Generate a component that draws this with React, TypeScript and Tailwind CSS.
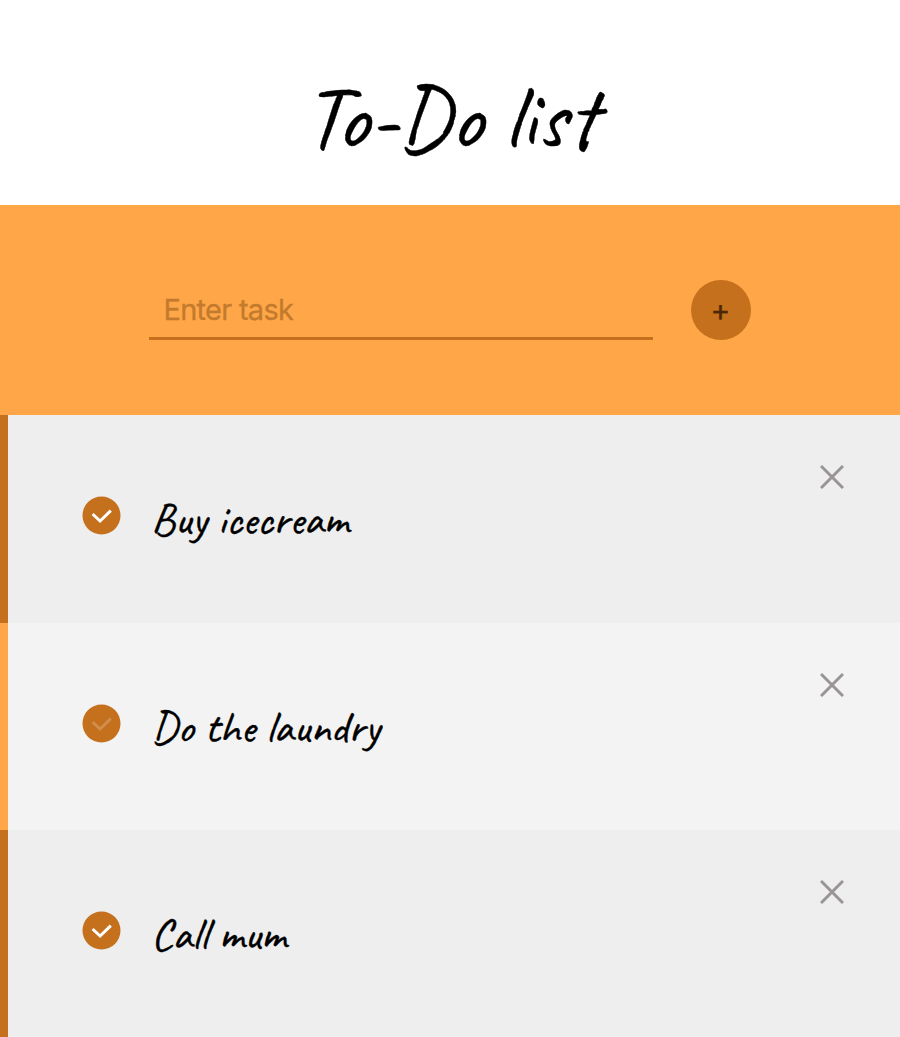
type Task = { text: string; done: boolean };

const TASKS: Task[] = [
  { text: "Buy icecream", done: true },
  { text: "Do the laundry", done: false },
  { text: "Call mum", done: true },
];

function CheckBadge({ done }: { done: boolean }) {
  return (
    <button aria-label="Toggle task" className="size-10 shrink-0">
      <svg viewBox="0 0 40 40" className="size-full" fill="none">
        <circle cx="19.5" cy="19.5" r="19" fill="#c4701c" />
        <path d="M10.6 18 18.1 25 28.8 14.6" stroke={done ? "#ffffff" : "#d08d4c"} strokeWidth="3" />
      </svg>
    </button>
  );
}

function TaskRow({ task, odd }: { task: Task; odd: boolean }) {
  return (
    <li
      className={`flex h-[207.6px] items-start border-l-8 ${
        odd ? "border-[#ffa748] bg-[#f3f3f3]" : "border-[#c4701c] bg-[#eeeeee]"
      }`}
    >
      <div className="flex flex-1 items-start pt-[81px] pl-[74px]">
        <CheckBadge done={task.done} />
        <p className="mt-px ml-[29px] font-['Caveat',cursive] text-[45px] leading-[45px] font-medium tracking-[0.05px] text-black [-webkit-text-stroke:0.35px_black]">
          {task.text}
        </p>
      </div>
      <button aria-label="Delete task" className="mt-[50px] mr-[56px] size-6">
        <svg viewBox="0 0 24 24" className="size-6" fill="none" stroke="#999595" strokeWidth="3">
          <path d="M1 1 23 23M23 1 1 23" />
        </svg>
      </button>
    </li>
  );
}

export default function App() {
  return (
    <main className="h-[1037px] w-[900px] overflow-hidden bg-white">
      <header className="h-[204.7px] pt-[73px] text-center">
        <h1 className="font-['Caveat',cursive] text-[90px] leading-[90px] font-medium text-black [-webkit-text-stroke:0.4px_black]">
          To-Do list
        </h1>
      </header>
      <form className="flex h-[210.6px] items-start bg-[#ffa748] pt-[75px] pl-[149px]" onSubmit={(e) => e.preventDefault()}>
        <input
          placeholder="Enter task"
          className="h-[60.5px] w-[504px] border-b-[3px] border-[#c4701c] bg-transparent px-[14.5px] pt-[3px] font-['Inter',sans-serif] text-[29px] tracking-[-0.72px] outline-none placeholder:text-[#c47a2d] placeholder:[-webkit-text-stroke:0.3px_#c47a2d]"
        />
        <button className="ml-[38px] flex size-[60px] items-center justify-center rounded-full bg-[#c4701c] pr-px font-['Inter',sans-serif] text-[30px] leading-none text-[#4d2704] [-webkit-text-stroke:0.3px_#4d2704]">
          +
        </button>
      </form>
      <ul>
        {TASKS.map((task, i) => (
          <TaskRow key={task.text} task={task} odd={i % 2 === 1} />
        ))}
      </ul>
    </main>
  );
}
